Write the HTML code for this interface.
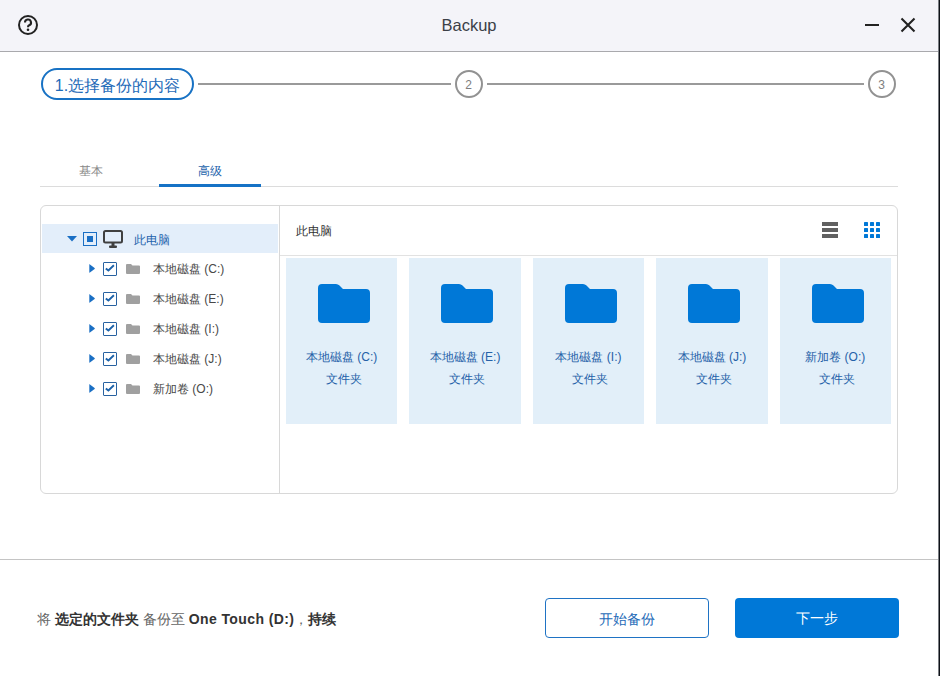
<!DOCTYPE html>
<html><head><meta charset="utf-8">
<style>
*{box-sizing:border-box;margin:0;padding:0}
html,body{width:940px;height:676px;overflow:hidden;background:#fff;font-family:"Liberation Sans",sans-serif}
.abs{position:absolute}
#title{left:0;top:0;width:938px;height:52px;background:#f4f4f9;border-bottom:1px solid #a9a9ad}
#edge1{left:938px;top:0;width:1px;height:676px;background:#7a7d82}
#edge2{left:939px;top:0;width:1px;height:676px;background:#0e1117}
.ttl{left:0;width:938px;top:15px;text-align:center;font-size:16.5px;color:#3b3f47;line-height:20px}
.pill{left:41px;top:68px;width:153px;height:32px;border:2px solid #1872c4;border-radius:16px;color:#1f6bb8;font-size:16px;line-height:31px;text-align:center}
.sline{height:2px;background:#9a9a9a;top:83px}
.circ{width:28px;height:28px;border:2px solid #929292;border-radius:50%;top:70px;color:#7e7e7e;font-size:12px;line-height:26px;text-align:center;text-indent:-1px}
.tab{top:163px;font-size:12px;line-height:16px}
#rule{left:40px;top:186px;width:858px;height:1px;background:#dcdcdc}
#ul{left:159px;top:184px;width:102px;height:3px;background:#1672c6}
#panel{left:40px;top:205px;width:858px;height:289px;border:1px solid #d8d8d8;border-radius:6px}
#div{left:279px;top:206px;width:1px;height:287px;background:#d8d8d8}
#hdr{left:280px;top:255px;width:617px;height:1px;background:#e2e2e2}
#selrow{left:42px;top:224px;width:236px;height:29px;background:#e3eefa}
.row{font-size:12px;color:#484848;line-height:14px}
.tile{top:258px;width:111.4px;height:166px;background:#e2eff9}
.tname{left:0;width:100%;text-align:center;font-size:12px;color:#2561a8;line-height:14px}
.btn1{left:545px;top:598px;width:164px;height:40px;border:1px solid #1f73c4;border-radius:4px;color:#1f6bb8;font-size:14px;line-height:40px;text-align:center}
.btn2{left:735px;top:598px;width:164px;height:40px;background:#0078d7;border-radius:4px;color:#fff;font-size:14px;line-height:40px;text-align:center}
#sep{left:0;top:559px;width:938px;height:1px;background:#c4c4c4}
.foot{left:37px;top:610px;font-size:14px;color:#666;line-height:18px;white-space:nowrap}
.foot b{color:#333}
</style></head><body>
<div id="title" class="abs"></div>
<div id="edge1" class="abs"></div>
<div id="edge2" class="abs"></div>
<div class="abs ttl">Backup</div>
<!-- help icon -->
<svg class="abs" style="left:17px;top:14px" width="22" height="22" viewBox="0 0 22 22">
<circle cx="11" cy="11" r="9" fill="none" stroke="#222" stroke-width="2"/>
<path d="M8 8.6 a3 3 0 1 1 4.2 2.7 c-0.9 0.4 -1.2 0.9 -1.2 1.9" fill="none" stroke="#222" stroke-width="2.1"/>
<circle cx="11" cy="15.8" r="1.3" fill="#222"/>
</svg>
<!-- minimize / close -->
<div class="abs" style="left:865px;top:24px;width:14px;height:2px;background:#222"></div>
<svg class="abs" style="left:900px;top:17px" width="16" height="16" viewBox="0 0 16 16">
<path d="M1.5 1.5 L14.5 14.5 M14.5 1.5 L1.5 14.5" stroke="#222" stroke-width="2.1"/>
</svg>

<!-- steps -->
<div class="abs pill">1.选择备份的内容</div>
<div class="abs sline" style="left:198px;width:253px"></div>
<div class="abs circ" style="left:455px">2</div>
<div class="abs sline" style="left:487px;width:377px"></div>
<div class="abs circ" style="left:868px">3</div>

<!-- tabs -->
<div class="abs tab" style="left:79px;color:#888">基本</div>
<div class="abs tab" style="left:198px;color:#2463ac">高级</div>
<div id="rule" class="abs"></div>
<div id="ul" class="abs"></div>

<!-- panel -->
<div id="panel" class="abs"></div>
<div id="div" class="abs"></div>
<div id="hdr" class="abs"></div>
<div id="selrow" class="abs"></div>

<!-- root row -->
<svg class="abs" style="left:67px;top:236px" width="10" height="6" viewBox="0 0 10 6"><path d="M0 0 H10 L5 5.5 Z" fill="#1a6fc4"/></svg>
<div class="abs" style="left:83px;top:232px;width:14px;height:14px;border:1.5px solid #1a6fc4"></div>
<div class="abs" style="left:87px;top:236px;width:6px;height:6px;background:#1a6fc4"></div>
<svg class="abs" style="left:103px;top:230px" width="20" height="18" viewBox="0 0 20 18">
<rect x="1" y="1" width="18" height="11.5" rx="1.5" fill="none" stroke="#404040" stroke-width="2"/>
<rect x="8.5" y="13" width="3" height="3" fill="#404040"/>
<rect x="6" y="15.5" width="8" height="2.5" rx="1" fill="#404040"/>
</svg>
<div class="abs row" style="left:133.5px;top:233px;color:#2463ac">此电脑</div>

<!-- child rows -->
<svg class="abs" style="left:89px;top:264px" width="6" height="9" viewBox="0 0 6 9"><path d="M0.3 0.6 Q0.3 0 0.9 0.4 L5.6 4 Q6 4.5 5.6 5 L0.9 8.6 Q0.3 9 0.3 8.4 Z" fill="#1a6fc4"/></svg>
<div class="abs" style="left:103px;top:262px;width:14px;height:14px;border:1.3px solid #2862a0;border-radius:1px"></div>
<svg class="abs" style="left:105px;top:264px" width="10" height="10" viewBox="0 0 10 10"><path d="M0.8 4.4 L3.4 6.5 L8.9 1.2" fill="none" stroke="#1c62aa" stroke-width="1.9"/></svg>
<svg class="abs" style="left:126px;top:264px" width="14" height="10" viewBox="0 0 14 10"><path d="M0 1 Q0 0 1 0 H5 L6.5 1.5 H13 Q14 1.5 14 2.5 V9 Q14 10 13 10 H1 Q0 10 0 9 Z" fill="#a0a0a0"/></svg>
<div class="abs row" style="left:153px;top:262px">本地磁盘 (C:)</div>
<svg class="abs" style="left:89px;top:294px" width="6" height="9" viewBox="0 0 6 9"><path d="M0.3 0.6 Q0.3 0 0.9 0.4 L5.6 4 Q6 4.5 5.6 5 L0.9 8.6 Q0.3 9 0.3 8.4 Z" fill="#1a6fc4"/></svg>
<div class="abs" style="left:103px;top:292px;width:14px;height:14px;border:1.3px solid #2862a0;border-radius:1px"></div>
<svg class="abs" style="left:105px;top:294px" width="10" height="10" viewBox="0 0 10 10"><path d="M0.8 4.4 L3.4 6.5 L8.9 1.2" fill="none" stroke="#1c62aa" stroke-width="1.9"/></svg>
<svg class="abs" style="left:126px;top:294px" width="14" height="10" viewBox="0 0 14 10"><path d="M0 1 Q0 0 1 0 H5 L6.5 1.5 H13 Q14 1.5 14 2.5 V9 Q14 10 13 10 H1 Q0 10 0 9 Z" fill="#a0a0a0"/></svg>
<div class="abs row" style="left:153px;top:292px">本地磁盘 (E:)</div>
<svg class="abs" style="left:89px;top:324px" width="6" height="9" viewBox="0 0 6 9"><path d="M0.3 0.6 Q0.3 0 0.9 0.4 L5.6 4 Q6 4.5 5.6 5 L0.9 8.6 Q0.3 9 0.3 8.4 Z" fill="#1a6fc4"/></svg>
<div class="abs" style="left:103px;top:322px;width:14px;height:14px;border:1.3px solid #2862a0;border-radius:1px"></div>
<svg class="abs" style="left:105px;top:324px" width="10" height="10" viewBox="0 0 10 10"><path d="M0.8 4.4 L3.4 6.5 L8.9 1.2" fill="none" stroke="#1c62aa" stroke-width="1.9"/></svg>
<svg class="abs" style="left:126px;top:324px" width="14" height="10" viewBox="0 0 14 10"><path d="M0 1 Q0 0 1 0 H5 L6.5 1.5 H13 Q14 1.5 14 2.5 V9 Q14 10 13 10 H1 Q0 10 0 9 Z" fill="#a0a0a0"/></svg>
<div class="abs row" style="left:153px;top:322px">本地磁盘 (I:)</div>
<svg class="abs" style="left:89px;top:354px" width="6" height="9" viewBox="0 0 6 9"><path d="M0.3 0.6 Q0.3 0 0.9 0.4 L5.6 4 Q6 4.5 5.6 5 L0.9 8.6 Q0.3 9 0.3 8.4 Z" fill="#1a6fc4"/></svg>
<div class="abs" style="left:103px;top:352px;width:14px;height:14px;border:1.3px solid #2862a0;border-radius:1px"></div>
<svg class="abs" style="left:105px;top:354px" width="10" height="10" viewBox="0 0 10 10"><path d="M0.8 4.4 L3.4 6.5 L8.9 1.2" fill="none" stroke="#1c62aa" stroke-width="1.9"/></svg>
<svg class="abs" style="left:126px;top:354px" width="14" height="10" viewBox="0 0 14 10"><path d="M0 1 Q0 0 1 0 H5 L6.5 1.5 H13 Q14 1.5 14 2.5 V9 Q14 10 13 10 H1 Q0 10 0 9 Z" fill="#a0a0a0"/></svg>
<div class="abs row" style="left:153px;top:352px">本地磁盘 (J:)</div>
<svg class="abs" style="left:89px;top:384px" width="6" height="9" viewBox="0 0 6 9"><path d="M0.3 0.6 Q0.3 0 0.9 0.4 L5.6 4 Q6 4.5 5.6 5 L0.9 8.6 Q0.3 9 0.3 8.4 Z" fill="#1a6fc4"/></svg>
<div class="abs" style="left:103px;top:382px;width:14px;height:14px;border:1.3px solid #2862a0;border-radius:1px"></div>
<svg class="abs" style="left:105px;top:384px" width="10" height="10" viewBox="0 0 10 10"><path d="M0.8 4.4 L3.4 6.5 L8.9 1.2" fill="none" stroke="#1c62aa" stroke-width="1.9"/></svg>
<svg class="abs" style="left:126px;top:384px" width="14" height="10" viewBox="0 0 14 10"><path d="M0 1 Q0 0 1 0 H5 L6.5 1.5 H13 Q14 1.5 14 2.5 V9 Q14 10 13 10 H1 Q0 10 0 9 Z" fill="#a0a0a0"/></svg>
<div class="abs row" style="left:153px;top:382px">新加卷 (O:)</div>

<!-- right header -->
<div class="abs row" style="left:296px;top:224px;color:#333">此电脑</div>
<svg class="abs" style="left:822px;top:222px" width="16" height="16" viewBox="0 0 16 16" fill="#616161">
<rect x="0" y="0" width="16" height="4"/><rect x="0" y="6" width="16" height="4"/><rect x="0" y="12" width="16" height="4"/>
</svg>
<svg class="abs" style="left:864px;top:222px" width="16" height="16" viewBox="0 0 16 16" fill="#0078d7">
<rect x="0" y="0" width="4" height="4" rx=".6"/><rect x="6" y="0" width="4" height="4" rx=".6"/><rect x="12" y="0" width="4" height="4" rx=".6"/>
<rect x="0" y="6" width="4" height="4" rx=".6"/><rect x="6" y="6" width="4" height="4" rx=".6"/><rect x="12" y="6" width="4" height="4" rx=".6"/>
<rect x="0" y="12" width="4" height="4" rx=".6"/><rect x="6" y="12" width="4" height="4" rx=".6"/><rect x="12" y="12" width="4" height="4" rx=".6"/>
</svg>

<div class="abs tile" style="left:286.0px">
<svg class="abs" style="left:32px;top:26px" width="52" height="39" viewBox="0 0 52 39"><path d="M0 4 Q0 0 4 0 H18 Q20 0 21.5 1.5 L25 5 H48 Q52 5 52 9 V35 Q52 39 48 39 H4 Q0 39 0 35 Z" fill="#0078d7"/></svg>
<div class="abs tname" style="top:92px">本地磁盘 (C:)</div>
<div class="abs tname" style="top:114px;padding-left:4px">文件夹</div>
</div>
<div class="abs tile" style="left:409.4px">
<svg class="abs" style="left:32px;top:26px" width="52" height="39" viewBox="0 0 52 39"><path d="M0 4 Q0 0 4 0 H18 Q20 0 21.5 1.5 L25 5 H48 Q52 5 52 9 V35 Q52 39 48 39 H4 Q0 39 0 35 Z" fill="#0078d7"/></svg>
<div class="abs tname" style="top:92px">本地磁盘 (E:)</div>
<div class="abs tname" style="top:114px;padding-left:4px">文件夹</div>
</div>
<div class="abs tile" style="left:532.8px">
<svg class="abs" style="left:32px;top:26px" width="52" height="39" viewBox="0 0 52 39"><path d="M0 4 Q0 0 4 0 H18 Q20 0 21.5 1.5 L25 5 H48 Q52 5 52 9 V35 Q52 39 48 39 H4 Q0 39 0 35 Z" fill="#0078d7"/></svg>
<div class="abs tname" style="top:92px">本地磁盘 (I:)</div>
<div class="abs tname" style="top:114px;padding-left:4px">文件夹</div>
</div>
<div class="abs tile" style="left:656.2px">
<svg class="abs" style="left:32px;top:26px" width="52" height="39" viewBox="0 0 52 39"><path d="M0 4 Q0 0 4 0 H18 Q20 0 21.5 1.5 L25 5 H48 Q52 5 52 9 V35 Q52 39 48 39 H4 Q0 39 0 35 Z" fill="#0078d7"/></svg>
<div class="abs tname" style="top:92px">本地磁盘 (J:)</div>
<div class="abs tname" style="top:114px;padding-left:4px">文件夹</div>
</div>
<div class="abs tile" style="left:779.6px">
<svg class="abs" style="left:32px;top:26px" width="52" height="39" viewBox="0 0 52 39"><path d="M0 4 Q0 0 4 0 H18 Q20 0 21.5 1.5 L25 5 H48 Q52 5 52 9 V35 Q52 39 48 39 H4 Q0 39 0 35 Z" fill="#0078d7"/></svg>
<div class="abs tname" style="top:92px">新加卷 (O:)</div>
<div class="abs tname" style="top:114px;padding-left:4px">文件夹</div>
</div>

<!-- footer -->
<div id="sep" class="abs"></div>
<div class="abs foot">将 <b>选定的文件夹</b> 备份至 <b style="letter-spacing:0.4px">One Touch (D:)</b>，<b>持续</b></div>
<div class="abs btn1">开始备份</div>
<div class="abs btn2">下一步</div>
</body></html>
